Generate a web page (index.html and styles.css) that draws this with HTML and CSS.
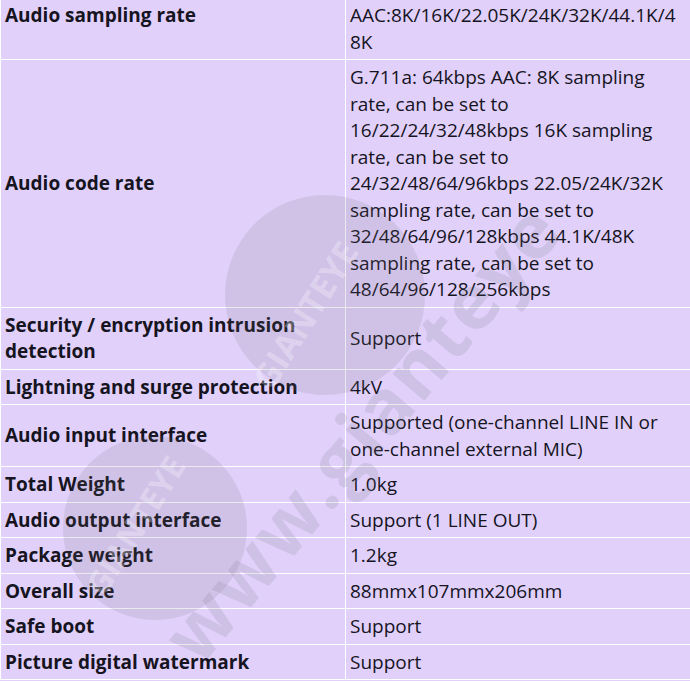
FILE: index.html
```html
<!DOCTYPE html>
<html>
<head>
<meta charset="utf-8">
<link rel="stylesheet" href="styles.css">
</head>
<body>
<div class="sheet">
<table class="spec">
<colgroup><col class="c-label"><col class="c-value"></colgroup>
<tbody>
<tr><th class="top">Audio sampling rate</th><td>AAC:8K/16K/22.05K/24K/32K/44.1K/48K</td></tr>
<tr><th>Audio code rate</th><td>G.711a: 64kbps AAC: 8K sampling rate, can be set to 16/22/24/32/48kbps 16K sampling rate, can be set to 24/32/48/64/96kbps 22.05/24K/32K sampling rate, can be set to 32/48/64/96/128kbps 44.1K/48K sampling rate, can be set to 48/64/96/128/256kbps</td></tr>
<tr><th>Security / encryption intrusion detection</th><td>Support</td></tr>
<tr><th>Lightning and surge protection</th><td>4kV</td></tr>
<tr><th>Audio input interface</th><td>Supported (one-channel LINE IN or one-channel external MIC)</td></tr>
<tr><th>Total Weight</th><td>1.0kg</td></tr>
<tr><th>Audio output interface</th><td>Support (1 LINE OUT)</td></tr>
<tr><th>Package weight</th><td>1.2kg</td></tr>
<tr><th>Overall size</th><td>88mmx107mmx206mm</td></tr>
<tr><th>Safe boot</th><td>Support</td></tr>
<tr><th>Picture digital watermark</th><td>Support</td></tr>
</tbody>
</table>
<svg class="watermark" viewBox="0 0 690 681" width="690" height="681" aria-hidden="true">
  <g fill="#6e6a78" fill-opacity="0.14">
    <circle cx="325" cy="295" r="100"/>
    <circle cx="155" cy="528" r="92"/>
  </g>
  <g fill="#ffffff" fill-opacity="0.3" font-family="Open Sans, sans-serif" font-weight="700">
    <text x="0" y="0" font-size="34" transform="translate(272 392) rotate(-58)">GIANTEYE</text>
    <text x="0" y="0" font-size="32" transform="translate(104 598) rotate(-58)">GIANTEYE</text>
  </g>
  <text x="0" y="0" font-size="76" font-weight="700" font-family="Open Sans, sans-serif" fill="#6e6a78" fill-opacity="0.15" letter-spacing="2" transform="translate(200 668) rotate(-50)">www.gianteye</text>
</svg>
</div>
</body>
</html>
```

FILE: styles.css
```css
html, body {
  margin: 0;
  padding: 0;
  background: #e0d0fa;
}

.sheet {
  position: relative;
  width: 690px;
  height: 681px;
  overflow: hidden;
}

.spec {
  width: 690px;
  margin-top: -3px;
  border-collapse: collapse;
  table-layout: fixed;
  background: #e0d0fa;
  font-family: "Open Sans", "Noto Sans", sans-serif;
  font-size: 19px;
  line-height: 26.5px;
  color: #16141e;
}

.c-label { width: 345px; }
.c-value { width: 345px; }

.spec th,
.spec td {
  border: 1px solid #ffffff;
  padding: 4px 4px;
  vertical-align: middle;
  text-align: left;
  overflow-wrap: anywhere;
}

.spec th {
  font-weight: 700;
}

.spec th.top {
  vertical-align: top;
}

.spec td {
  font-weight: 400;
}

.watermark {
  position: absolute;
  left: 0;
  top: 0;
  pointer-events: none;
}
```
